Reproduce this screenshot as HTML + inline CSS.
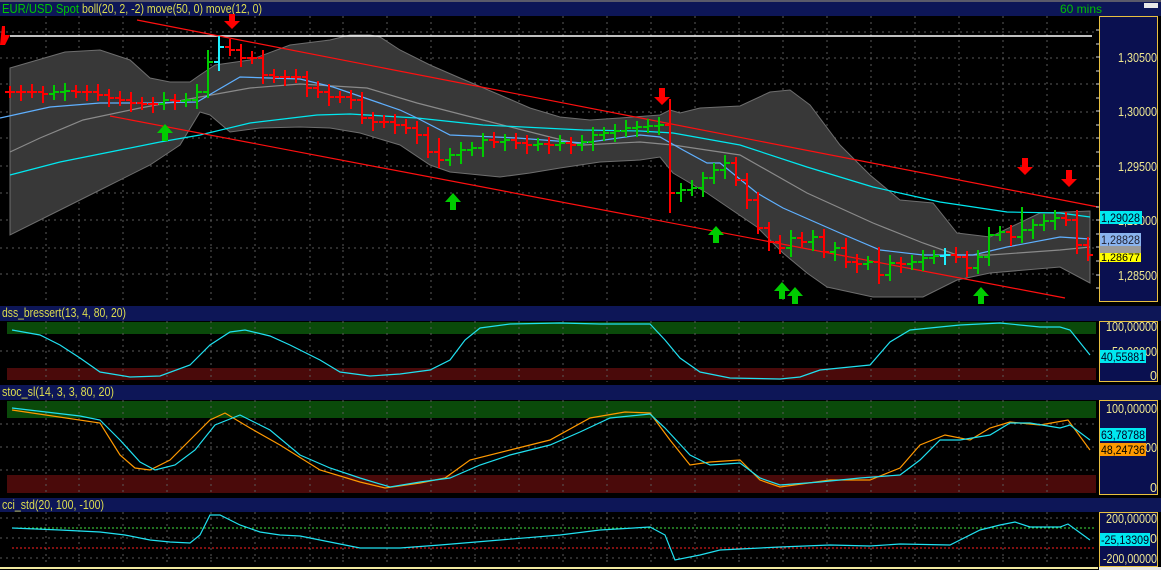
<!DOCTYPE html>
<html><head><meta charset="utf-8">
<style>
html,body{margin:0;padding:0;background:#000;width:1161px;height:570px;overflow:hidden}
svg{display:block}
text{font-family:"Liberation Sans",sans-serif}
</style></head><body>
<svg id="s" width="1161" height="570" viewBox="0 0 1161 570" xmlns="http://www.w3.org/2000/svg">
<rect width="1161" height="570" fill="#000"/>
<rect x="0" y="0" width="1161" height="2" fill="#5a5a6a"/>
<!-- header -->
<rect x="0" y="2" width="1161" height="14" fill="#0d1657"/>
<text x="2" y="13" font-size="12.5" fill="#00c800" textLength="77" lengthAdjust="spacingAndGlyphs">EUR/USD Spot</text>
<text x="82" y="13" font-size="12.5" fill="#dcdc50" textLength="180" lengthAdjust="spacingAndGlyphs">boll(20, 2, -2) move(50, 0) move(12, 0)</text>
<text x="1060" y="13" font-size="12" fill="#00c000">60 mins</text>
<rect x="1144" y="3" width="14" height="5" fill="#e8e8e8"/>

<!-- grid main -->
<g stroke="#5a5a5a" stroke-width="1" stroke-dasharray="2,4">
<path d="M46 16V300M79 16V300M123 16V300M167 16V300M211 16V300M255 16V300M310 16V300M343 16V300M387 16V300M431 16V300M475 16V300M519 16V300M563 16V300M607 16V300M651 16V300M695 16V300M739 16V300M783 16V300M827 16V300M871 16V300M915 16V300M959 16V300M1003 16V300M1047 16V300"/>
<path d="M0 32H1098M0 58H1098M0 84H1098M0 112H1098M0 138H1098M0 166H1098M0 193H1098M0 220H1098M0 248H1098M0 274H1098"/>
</g>

<!-- bollinger band -->
<path d="M10 68 L65 52 L100 50 L130 60 L150 78 L170 82 L190 82 L200 75 L215 65 L250 60 L290 45 L330 40 L350 35 L370 35 L380 37 L400 50 L430 65 L460 78 L500 95 L530 108 L560 117 L590 120 L620 118 L660 115 L670 110 L680 113 L700 108 L740 106 L770 92 L790 90 L810 105 L840 145 L870 175 L900 200 L933 203 L957 233 L990 237 L1040 213 L1090 211 L1090 283 L1060 267 L990 273 L957 280 L923 297 L873 297 L827 287 L807 273 L783 253 L757 227 L707 193 L673 173 L660 157 L640 160 L600 162 L560 168 L530 173 L500 177 L480 175 L450 172 L430 165 L400 145 L360 133 L330 128 L300 127 L260 128 L230 132 L210 115 L200 112 L180 145 L150 165 L100 190 L60 210 L10 235 Z" fill="#383838" stroke="#6e6e6e" stroke-width="1"/>

<!-- MAs -->
<polyline fill="none" stroke="#8a8a8a" stroke-width="1.2" points="10,152 40,138 83,120 140,108 200,97 250,88 300,84 367,88 417,103 483,120 550,137 583,145 640,142 673,145 740,155 807,193 873,223 923,243 957,255 990,255 1060,250 1090,247"/>
<polyline fill="none" stroke="#00e8f0" stroke-width="1.2" points="10,175 60,162 120,150 160,142 200,135 250,123 317,115 350,114 417,118 483,125 583,130 640,131 673,133 740,145 807,167 873,187 940,202 1007,212 1060,213 1090,217"/>
<polyline fill="none" stroke="#5fb0ff" stroke-width="1.2" points="0,118 50,107 100,103 150,103 197,102 240,77 300,79 333,87 400,110 417,118 450,135 517,138 583,143 640,135 660,137 683,150 707,163 720,163 757,193 783,208 840,233 880,250 923,255 973,255 1007,247 1060,237 1090,239"/>

<!-- trend lines -->
<line x1="10" y1="36" x2="1092" y2="36" stroke="#fff" stroke-width="1.5"/>
<line x1="137" y1="20" x2="1098" y2="207" stroke="#ff1010" stroke-width="1.2"/>
<line x1="110" y1="116" x2="1065" y2="298" stroke="#ff1010" stroke-width="1.2"/>

<!-- bars -->
<g id="bars" stroke-width="2" fill="none"></g>

<!-- arrows -->
<g fill="#ff0000">
<path d="M229 14h6v7h5l-8 8l-8-8h5z"/>
<path d="M659 88h6v9h5l-8 8l-8-8h5z"/>
<path d="M1022 158h6v9h5l-8 8l-8-8h5z"/>
<path d="M1066 170h6v9h5l-8 8l-8-8h5z"/>
<path d="M2 26h3v9h5l-5 10l-5 0z"/>
</g>
<g fill="#00cc00">
<path d="M162 141h6v-8h5l-8-9l-8 9h5z"/>
<path d="M450 210h6v-8h5l-8-9l-8 9h5z"/>
<path d="M713 243h6v-8h5l-8-9l-8 9h5z"/>
<path d="M779 299h6v-8h5l-8-9l-8 9h5z"/>
<path d="M792 304h6v-8h5l-8-9l-8 9h5z"/>
<path d="M978 304h6v-8h5l-8-9l-8 9h5z"/>
</g>

<!-- main axis -->
<rect x="1099.5" y="16.5" width="58" height="285" fill="#0a1050" stroke="#e8c040"/>
<g stroke="#ddd" stroke-width="1"><path d="M1096 30h3M1096 44h3M1096 57h4M1096 71h3M1096 84h3M1096 98h3M1096 111h4M1096 125h3M1096 138h3M1096 152h3M1096 166h4M1096 179h3M1096 193h3M1096 207h3M1096 220h4M1096 234h3M1096 247h3M1096 261h3M1096 275h4M1096 288h3"/></g>
<g font-size="12.5" fill="#f0e890">
<text x="1118" y="62" textLength="39" lengthAdjust="spacingAndGlyphs">1,30500</text>
<text x="1118" y="116" textLength="39" lengthAdjust="spacingAndGlyphs">1,30000</text>
<text x="1118" y="171" textLength="39" lengthAdjust="spacingAndGlyphs">1,29500</text>
<text x="1118" y="225" textLength="39" lengthAdjust="spacingAndGlyphs">1,29000</text>
<text x="1118" y="280" textLength="39" lengthAdjust="spacingAndGlyphs">1,28500</text>
</g>
<rect x="1100" y="211" width="42" height="13" fill="#00e8f0"/>
<text x="1101" y="222" font-size="12" fill="#002" textLength="39" lengthAdjust="spacingAndGlyphs">1,29028</text>
<rect x="1100" y="233" width="41" height="13" fill="#8ab4f0"/>
<text x="1101" y="244" font-size="12" fill="#223" textLength="39" lengthAdjust="spacingAndGlyphs">1,28828</text>
<rect x="1100" y="246" width="41" height="7" fill="#9a9a9a"/>
<rect x="1100" y="253" width="41" height="9" fill="#ffff00"/>
<text x="1101" y="261" font-size="11" fill="#000" textLength="39" lengthAdjust="spacingAndGlyphs">1,28677</text>

<!-- DSS panel -->
<rect x="0" y="306" width="1161" height="15" fill="#0d1657"/>
<text x="2" y="317" font-size="12.5" fill="#dcdc50" textLength="124" lengthAdjust="spacingAndGlyphs">dss_bressert(13, 4, 80, 20)</text>
<rect x="7" y="322" width="1089" height="12" fill="#0a4a0a"/>
<rect x="7" y="368" width="1089" height="12" fill="#4a0a0a"/>
<g stroke="#5a5a5a" stroke-dasharray="2,4"><path d="M46 321V382M79 321V382M123 321V382M167 321V382M211 321V382M255 321V382M310 321V382M343 321V382M387 321V382M431 321V382M475 321V382M519 321V382M563 321V382M607 321V382M651 321V382M695 321V382M739 321V382M783 321V382M827 321V382M871 321V382M915 321V382M959 321V382M1003 321V382M1047 321V382M0 351H1098"/></g>
<polyline fill="none" stroke="#20e0f0" stroke-width="1.2" points="12,330 40,335 60,345 80,358 100,372 130,377 160,376 190,365 210,345 230,332 245,330 270,336 290,345 320,360 340,372 370,376 400,374 430,370 450,360 465,340 480,328 510,324 560,323 600,324 650,324 665,340 680,358 700,372 730,378 780,379 800,377 820,370 840,368 870,365 890,342 910,330 960,325 1000,323 1040,327 1060,327 1070,330 1090,355"/>
<rect x="1099.5" y="321.5" width="58" height="60" fill="#0a1050" stroke="#e8c040"/>
<g font-size="12.5" fill="#f0e890"><text x="1106" y="331" textLength="51" lengthAdjust="spacingAndGlyphs">100,00000</text><text x="1112" y="356" textLength="45" lengthAdjust="spacingAndGlyphs">50,00000</text><text x="1150" y="380">0</text></g>
<rect x="1100" y="350" width="46" height="13" fill="#00e8f0"/>
<text x="1101" y="361" font-size="12" fill="#002" textLength="44" lengthAdjust="spacingAndGlyphs">40,55881</text>

<!-- STOC panel -->
<rect x="0" y="385" width="1161" height="15" fill="#0d1657"/>
<text x="2" y="396" font-size="12.5" fill="#dcdc50" textLength="112" lengthAdjust="spacingAndGlyphs">stoc_sl(14, 3, 3, 80, 20)</text>
<rect x="7" y="401" width="1089" height="17" fill="#0a4a0a"/>
<rect x="7" y="475" width="1089" height="18" fill="#4a0a0a"/>
<g stroke="#5a5a5a" stroke-dasharray="2,4"><path d="M46 400V495M79 400V495M123 400V495M167 400V495M211 400V495M255 400V495M310 400V495M343 400V495M387 400V495M431 400V495M475 400V495M519 400V495M563 400V495M607 400V495M651 400V495M695 400V495M739 400V495M783 400V495M827 400V495M871 400V495M915 400V495M959 400V495M1003 400V495M1047 400V495M0 424H1098M0 447H1098M0 470H1098"/></g>
<polyline fill="none" stroke="#ff9900" stroke-width="1.2" points="12,410 100,423 120,455 135,468 150,470 170,460 190,440 210,420 225,413 250,428 280,445 320,470 360,482 385,488 420,483 445,478 470,460 510,450 550,440 590,418 625,412 650,413 670,440 690,465 710,462 740,460 760,480 780,487 830,480 870,480 900,468 920,445 945,435 970,440 990,428 1010,422 1040,425 1068,420 1090,450"/>
<polyline fill="none" stroke="#20e0f0" stroke-width="1.2" points="12,408 80,416 100,420 120,440 140,462 155,470 175,465 195,450 215,425 240,415 270,430 300,455 330,468 360,478 390,487 420,482 450,478 480,465 510,455 550,445 580,432 610,418 650,414 665,428 690,455 710,465 740,463 760,478 780,485 820,482 860,478 900,475 920,460 940,440 960,440 990,435 1010,423 1030,423 1060,428 1070,425 1090,440"/>
<rect x="1099.5" y="400.5" width="58" height="94" fill="#0a1050" stroke="#e8c040"/>
<g font-size="12.5" fill="#f0e890"><text x="1106" y="413" textLength="51" lengthAdjust="spacingAndGlyphs">100,00000</text><text x="1112" y="452" textLength="45" lengthAdjust="spacingAndGlyphs">50,00000</text><text x="1150" y="492">0</text></g>
<rect x="1100" y="428" width="46" height="13" fill="#00e8f0"/>
<text x="1101" y="439" font-size="12" fill="#002" textLength="44" lengthAdjust="spacingAndGlyphs">63,78788</text>
<rect x="1100" y="443" width="46" height="13" fill="#ff9900"/>
<text x="1101" y="454" font-size="12" fill="#000" textLength="44" lengthAdjust="spacingAndGlyphs">48,24736</text>

<!-- CCI panel -->
<rect x="0" y="498" width="1161" height="14" fill="#0d1657"/>
<text x="2" y="509" font-size="12.5" fill="#dcdc50" textLength="102" lengthAdjust="spacingAndGlyphs">cci_std(20, 100, -100)</text>
<g stroke="#5a5a5a" stroke-dasharray="2,4"><path d="M46 512V566M79 512V566M123 512V566M167 512V566M211 512V566M255 512V566M310 512V566M343 512V566M387 512V566M431 512V566M475 512V566M519 512V566M563 512V566M607 512V566M651 512V566M695 512V566M739 512V566M783 512V566M827 512V566M871 512V566M915 512V566M959 512V566M1003 512V566M1047 512V566M0 518H1098M0 538H1098M0 558H1098"/></g>
<line x1="12" y1="528" x2="1096" y2="528" stroke="#40e040" stroke-dasharray="2,2"/>
<line x1="12" y1="548" x2="1096" y2="548" stroke="#ff2020" stroke-dasharray="2,2"/>
<polyline fill="none" stroke="#20e0f0" stroke-width="1.2" points="12,528 60,530 100,532 125,535 150,540 170,542 190,543 200,535 210,515 220,515 240,525 260,532 280,535 300,536 340,544 360,548 400,548 440,545 500,540 560,535 600,530 650,527 665,535 675,560 700,555 720,550 780,547 830,545 870,546 900,544 950,545 980,530 1000,525 1015,522 1030,527 1060,527 1068,524 1090,540"/>
<rect x="1099.5" y="512.5" width="58" height="54" fill="#0a1050" stroke="#e8c040"/>
<g font-size="12.5" fill="#f0e890"><text x="1106" y="523" textLength="51" lengthAdjust="spacingAndGlyphs">200,00000</text><text x="1150" y="543">0</text><text x="1103" y="563" textLength="54" lengthAdjust="spacingAndGlyphs">-200,00000</text></g>
<rect x="1100" y="533" width="50" height="13" fill="#00e8f0"/>
<text x="1101" y="544" font-size="12" fill="#002" textLength="48" lengthAdjust="spacingAndGlyphs">-25,13309</text>
<rect x="0" y="567" width="1098" height="2" fill="#f0e8a0"/>
<rect x="1099" y="567" width="62" height="3" fill="#e8e8e8"/>
</svg>
<script>
(function(){
var c=[92,92,92,94,92,91,92,92,95,98,100,103,104,104,100,101,100,92,62,47,50,58,58,75,77,77,77,88,92,97,97,100,118,122,122,125,128,135,152,160,155,150,148,140,142,140,143,145,144,145,143,145,142,135,133,131,128,127,126,125,193,190,188,178,170,163,180,200,228,242,248,238,242,237,252,248,262,264,262,275,263,264,262,258,256,255,257,268,257,235,232,237,230,225,221,218,220,245,255];
var g=document.getElementById('bars'),ns='http://www.w3.org/2000/svg';
var hiadd={18:6,38:0,39:8,60:20,19:4,76:3,79:8,97:3,92:15};
for(var i=0;i<c.length;i++){
 var x=10+11*i,o=i?c[i-1]:c[0],cl=c[i];
 var hi=Math.min(o,cl)-6-(hiadd[i]||0)-(i%3),lo=Math.max(o,cl)+6+(i%2)*3;
 if(i==60)lo=213;if(i==39)lo=168;
 var col=cl<o?'#00cc00':'#ff0000';if(i==19||i==85)col='#20f0ff';
 var p=document.createElementNS(ns,'path');
 p.setAttribute('d','M'+x+' '+hi+'V'+lo+'M'+(x-5)+' '+o+'H'+x+'M'+x+' '+cl+'H'+(x+5));
 p.setAttribute('stroke',col);g.appendChild(p);
}})();
</script>
</body></html>
